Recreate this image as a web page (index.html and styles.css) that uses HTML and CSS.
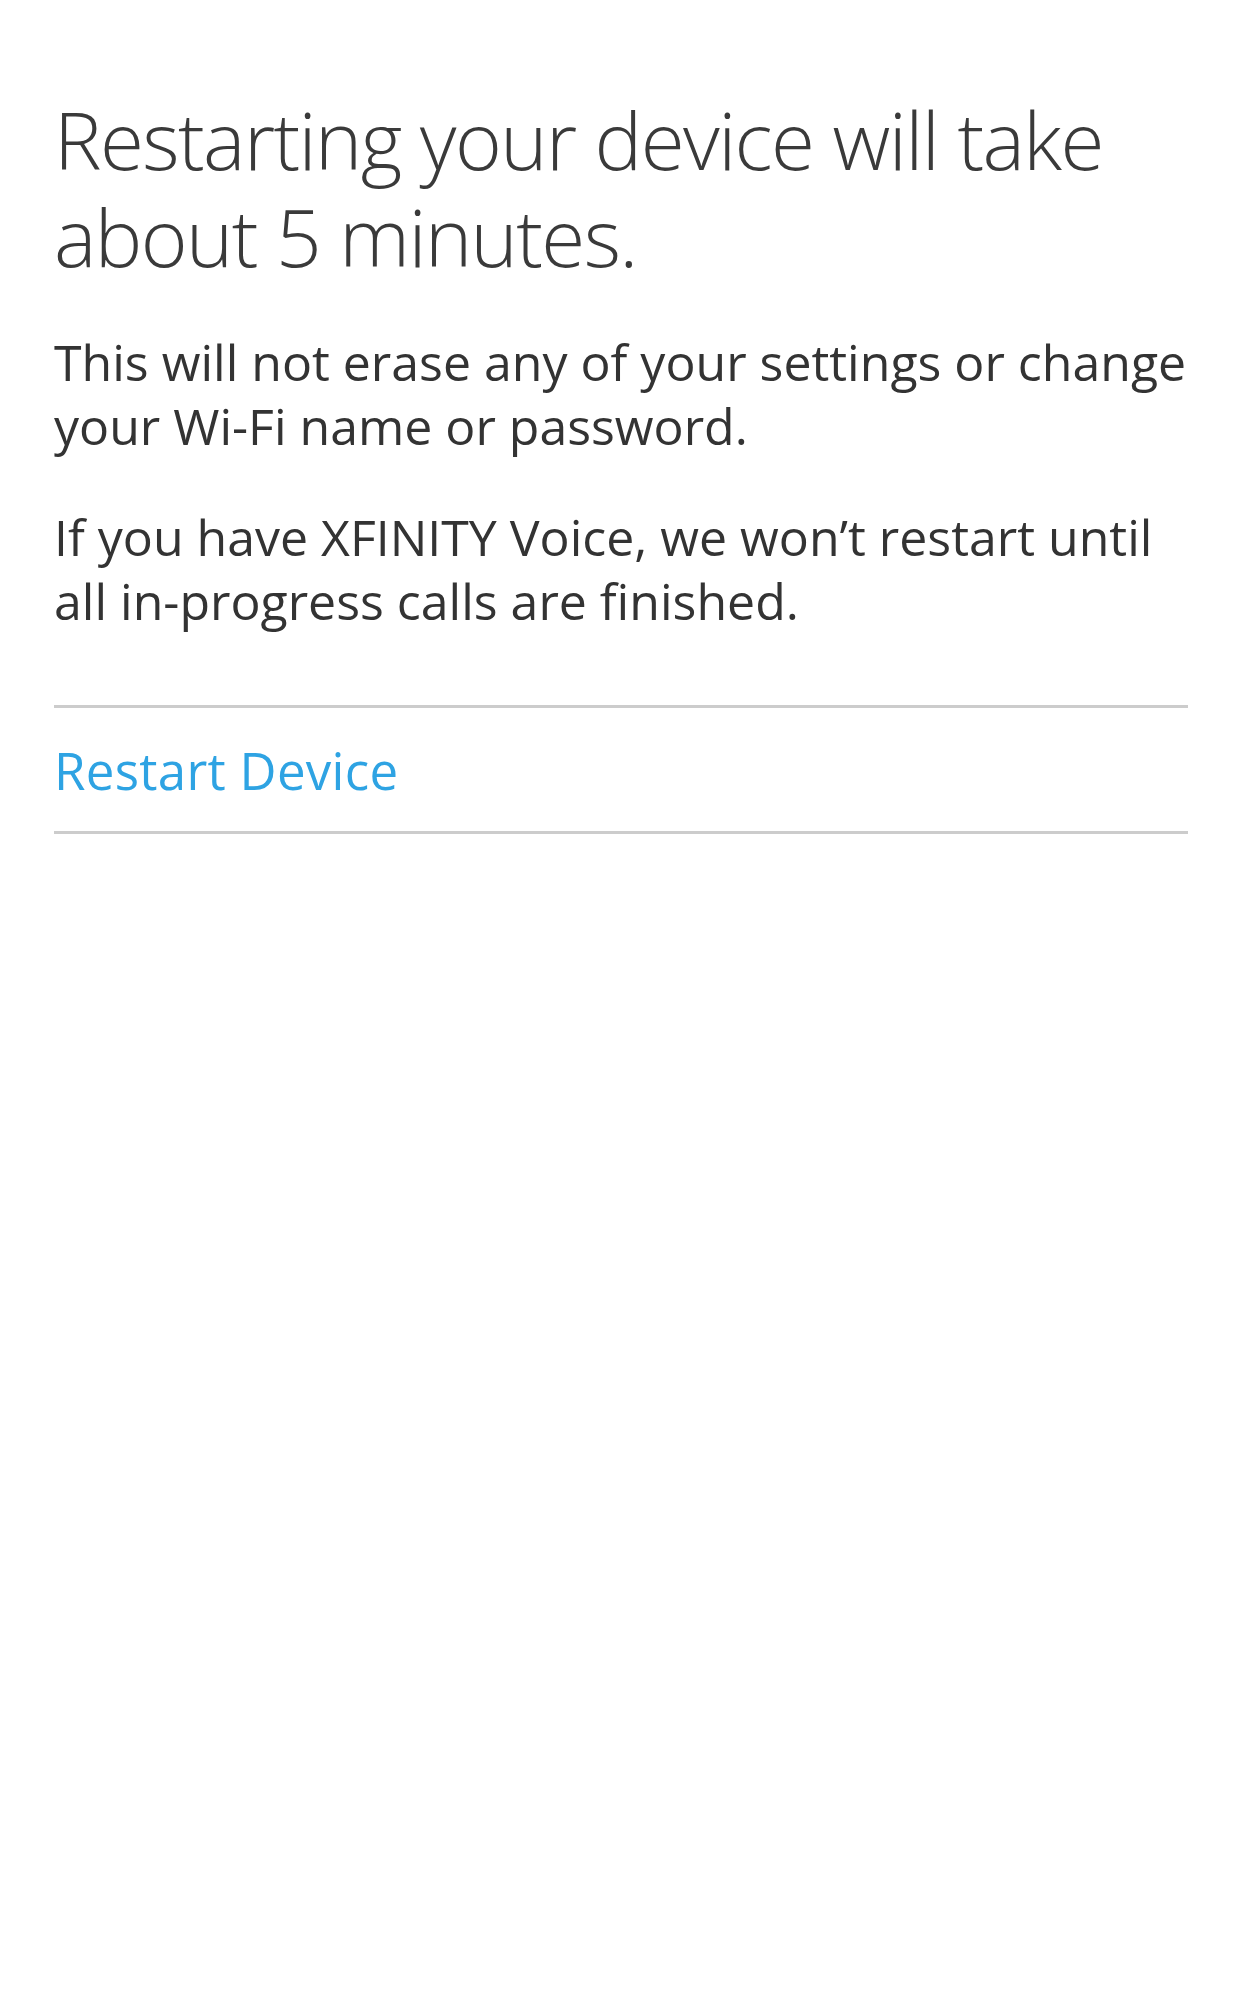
FILE: index.html
```html
<!DOCTYPE html>
<html>
<head>
<meta charset="utf-8">
<link rel="stylesheet" href="styles.css">
</head>
<body>
<main class="page">
  <h1 class="title">Restarting your device will take about 5 minutes.</h1>
  <p class="text">This will not erase any of your settings or change your Wi-Fi name or password.</p>
  <p class="text">If you have XFINITY Voice, we won’t restart until all in-progress calls are finished.</p>
  <div class="action-row">
    <a class="action" href="#">Restart Device</a>
  </div>
</main>
</body>
</html>
```

FILE: styles.css
```css
html, body {
  margin: 0;
  padding: 0;
  background: #ffffff;
}
body {
  font-family: "Open Sans", "Noto Sans", sans-serif;
  color: #333333;
}
.page {
  padding: 90px 54px 0 54px;
}
.title {
  margin: 0;
  font-size: 80px;
  font-weight: 300;
  line-height: 97px;
  letter-spacing: -1.6px;
  color: #3a3a3a;
}
.text {
  margin: 46px 0 0 0;
  font-size: 50px;
  font-weight: 400;
  line-height: 64px;
}
.text + .text {
  margin-top: 47px;
}
.action-row {
  margin-top: 72px;
  border-top: 3px solid #cccccc;
  border-bottom: 3px solid #cccccc;
  height: 123px;
  display: flex;
  align-items: center;
}
.action {
  color: #2ea3e3;
  text-decoration: none;
  font-size: 51px;
  letter-spacing: 0.3px;
  font-weight: 400;
}
```
